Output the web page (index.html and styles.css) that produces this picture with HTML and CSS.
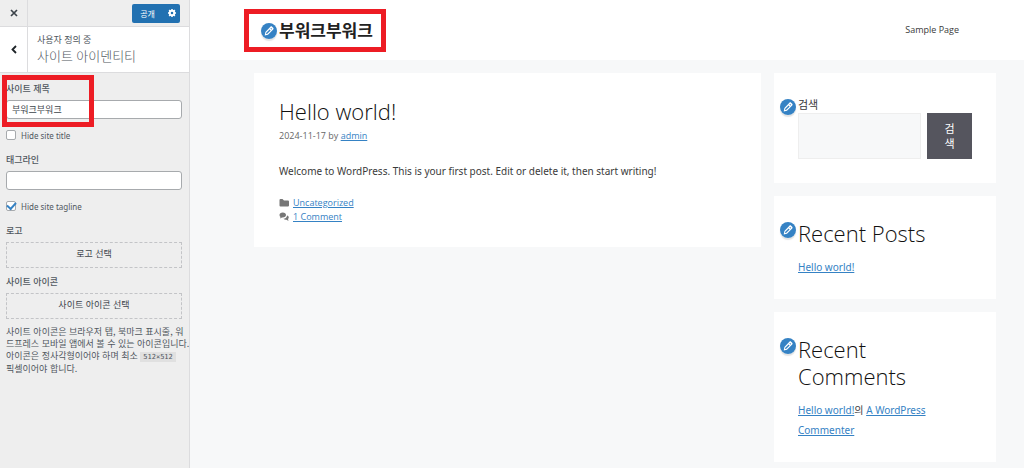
FILE: index.html
```html
<!DOCTYPE html>
<html lang="ko">
<head>
<meta charset="utf-8">
<meta name="viewport" content="width=device-width, initial-scale=1">
<title>사이트 아이덴티티</title>
<link rel="stylesheet" href="styles.css">
</head>
<body>
<svg class="defs" width="0" height="0" aria-hidden="true">
  <symbol id="pencil" viewBox="0 0 16 16">
    <circle cx="8" cy="8" r="8" fill="#3582c4"/>
    <path fill="#fff" fill-rule="evenodd" d="M9.400 3.700c.5-.5 1.200-.5 1.700 0l1.100 1.100c.5.5.5 1.200 0 1.700l-5.200 5.200-3.300.7.700-3.300zM5.300 9.700l-.3 1.300 1.300-.3 3.300-3.300-1-1zM9.400 5.600l1 1 .7-.7-1-1z"/>
  </symbol>
</svg>
<div class="app">
  <aside class="panel">
    <div class="bar">
      <button class="close" type="button" aria-label="닫기">
        <svg width="8" height="8" viewBox="0 0 8 8"><path d="M1 1l6 6M7 1L1 7" stroke="#3c434a" stroke-width="1.700"/></svg>
      </button>
      <div class="publish">
        <button class="save" type="button">공개</button>
        <button class="gear" type="button" aria-label="설정">
          <svg width="8" height="8" viewBox="0 0 16 16"><circle cx="8" cy="8" r="4.500" fill="none" stroke="#fff" stroke-width="4"/><path d="M8 0v3M8 13v3M0 8h3M13 8h3M2.300 2.300l2 2M11.700 11.700l2 2M13.700 2.300l-2 2M4.300 11.700l-2 2" stroke="#fff" stroke-width="3"/></svg>
        </button>
      </div>
    </div>
    <div class="heading">
      <button class="back" type="button" aria-label="뒤로">
        <svg width="6" height="9" viewBox="0 0 6 9"><path d="M5 1L1.500 4.500 5 8" fill="none" stroke="#1d2327" stroke-width="1.800"/></svg>
      </button>
      <div class="heading-text">
        <span class="kicker">사용자 정의 중</span>
        <h1 class="panel-title">사이트 아이덴티티</h1>
      </div>
    </div>
    <form class="controls">
      <div class="field marked">
        <label class="label" for="title">사이트 제목</label>
        <input class="text" id="title" type="text" value="부워크부워크">
        <span class="mark mark-field"></span>
      </div>
      <label class="check"><input type="checkbox">Hide site title</label>
      <div class="field">
        <label class="label" for="tagline">태그라인</label>
        <input class="text" id="tagline" type="text">
      </div>
      <label class="check"><input type="checkbox" checked>Hide site tagline</label>
      <div class="field upload">
        <span class="label">로고</span>
        <button class="select" type="button">로고 선택</button>
      </div>
      <div class="field">
        <span class="label">사이트 아이콘</span>
        <button class="select" type="button">사이트 아이콘 선택</button>
      </div>
      <p class="help">사이트 아이콘은 브라우저 탭, 북마크 표시줄, 워<br>드프레스 모바일 앱에서 볼 수 있는 아이콘입니다.<br>아이콘은 정사각형이어야 하며 최소 <code>512×512</code><br>픽셀이어야 합니다.</p>
    </form>
  </aside>
  <div class="preview">
    <header class="site-header">
      <div class="brand">
        <button class="edit edit-brand" type="button" aria-label="제목 편집"><svg width="16" height="16"><use href="#pencil"/></svg></button>
        <span class="site-name">부워크부워크</span>
        <span class="mark mark-brand"></span>
      </div>
      <nav><a class="nav-link" href="#">Sample Page</a></nav>
    </header>
    <div class="columns">
      <main class="card post">
        <h2 class="title">Hello world!</h2>
        <p class="meta">2024-11-17 by <a href="#">admin</a></p>
        <p class="body">Welcome to WordPress. This is your first post. Edit or delete it, then start writing!</p>
        <div class="terms">
          <div class="term"><svg width="10" height="10" viewBox="0 0 20 20"><path fill="#777" d="M1 4q0-2 2-2h4l3 3h8q2 0 2 2v8q0 2-2 2H3q-2 0-2-2z"/></svg><a href="#">Uncategorized</a></div>
          <div class="term"><svg width="10" height="10" viewBox="0 0 20 20"><path fill="#777" d="M7.500 1C3.500 1 1 3 1 6c0 1.700.8 3 2 4L2 13l4-2c5 .4 8-2 8-5 0-3-2.500-5-6.500-5zM16 7c0 4-3 6-7 6.400 1.300 1.500 3.500 2.200 6 1.900L19 18l-1-4c2.500-2 2-6-2-7z"/></svg><a href="#">1 Comment</a></div>
        </div>
      </main>
      <aside class="widgets">
        <section class="card widget">
          <button class="edit" type="button" aria-label="검색 위젯 편집"><svg width="16" height="16"><use href="#pencil"/></svg></button>
          <label class="search-label" for="q">검색</label>
          <div class="search-row">
            <input class="search-input" id="q" type="search">
            <button class="search-button" type="button">검<br>색</button>
          </div>
        </section>
        <section class="card widget list">
          <button class="edit" type="button" aria-label="글 위젯 편집"><svg width="16" height="16"><use href="#pencil"/></svg></button>
          <h2 class="title">Recent Posts</h2>
          <p class="links"><a href="#">Hello world!</a></p>
        </section>
        <section class="card widget list">
          <button class="edit" type="button" aria-label="댓글 위젯 편집"><svg width="16" height="16"><use href="#pencil"/></svg></button>
          <h2 class="title">Recent<br>Comments</h2>
          <p class="links"><a href="#">Hello world!</a>의 <a href="#">A WordPress Commenter</a></p>
        </section>
      </aside>
    </div>
  </div>
</div>
</body>
</html>
```
FILE: styles.css
```css
* { box-sizing: border-box; }
body {
  margin: 0;
  font-family: "Noto Sans", "Noto Sans CJK KR", sans-serif;
  color: #3a3a3a;
}
h1, h2, p { margin: 0; font-weight: 400; }
button { margin: 0; padding: 0; border: 0; background: none; font: inherit; color: inherit; }
svg { display: block; }
.defs { position: absolute; }
a { color: #3582c4; }

.app { display: flex; min-height: 100vh; background: #f7f8f9; }

.panel {
  flex: 0 0 190px;
  min-width: 0;
  border-right: 1px solid #dcdcde;
  background: #eee;
  color: #50575e;
  font-size: 8px;
}
.bar {
  display: flex;
  justify-content: space-between;
  height: 27px;
  border-bottom: 1px solid #dcdcde;
}
.close, .back {
  display: grid;
  place-items: center;
  width: 28px;
  border-right: 1px solid #dcdcde;
}
.publish {
  display: flex;
  align-self: center;
  height: 19px;
  margin-right: 9px;
  border-radius: 2px;
  background: #2271b1;
  color: #fff;
}
.save { width: 31px; }
.gear { display: grid; place-items: center; width: 17px; }

.heading {
  display: flex;
  height: 46px;
  border-bottom: 1px solid #dcdcde;
  background: #fff;
}
.heading-text { padding: 7px 9px; }
.kicker { display: block; line-height: 12px; font-size: 9px; }
.panel-title { font-size: 13px; line-height: 20px; font-weight: 300; }

.controls { padding: 10px 7px 10px 6px; }
.marked { position: relative; }
.label { display: block; font-size: 9px; line-height: 12px; font-weight: 500; margin-bottom: 5px; }
.text {
  display: block;
  width: 100%;
  height: 19px;
  padding: 0 5px;
  border: 1px solid #a7aaad;
  border-radius: 3px;
  background: #fff;
  color: #3c434a;
  font: inherit;
  font-size: 9px;
}
.check { display: flex; align-items: center; gap: 5px; height: 12px; margin: 10px 0 13px; }
.check input {
  appearance: none;
  width: 10px;
  height: 10px;
  margin: 0;
  border: 1px solid #a7aaad;
  border-radius: 2px;
  background: #fff;
  display: grid;
  place-items: center;
}
.check input:checked::before {
  content: "";
  width: 7px;
  height: 4px;
  margin-bottom: 2px;
  border: solid #3582c4;
  border-width: 0 0 2px 2px;
  transform: rotate(-48deg);
}
.field .select {
  display: block;
  width: 100%;
  height: 26px;
  border: 1px dashed #c3c4c7;
  color: #3c434a;
  font-family: "Noto Sans CJK KR", sans-serif;
  font-size: 9px;
  line-height: 12px;
  padding-bottom: 2px;
}
.upload { margin-bottom: 8px; }
.help {
  margin-top: 7px;
  font-family: "Noto Sans CJK KR", sans-serif;
  font-size: 9px;
  line-height: 12px;
  white-space: nowrap;
}
.help code { padding: 1px 3px; background: #e0e0e0; font-family: "DejaVu Sans Mono", monospace; font-size: 7px; }

.mark { position: absolute; border: 5px solid #ed1c24; pointer-events: none; }
.mark-field { left: -4px; top: -8px; width: 92px; height: 52px; }
.mark-brand { left: -35px; top: -8px; width: 142px; height: 43px; }

.preview { flex: 1; min-width: 0; }
.site-header {
  display: flex;
  align-items: center;
  justify-content: space-between;
  height: 60px;
  padding: 0 65px 0 89px;
  background: #fff;
}
.brand { position: relative; }
.site-name { display: block; font-size: 17px; line-height: 27px; font-weight: 700; color: #222; }
.nav-link {
  display: block;
  font-family: "Open Sans", sans-serif;
  font-size: 9px;
  line-height: 14px;
  color: #3a3a3a;
  text-decoration: none;
}
.edit {
  position: absolute;
  left: 6px;
  top: 26px;
  width: 16px;
  height: 16px;
  border-radius: 50%;
  box-shadow: 0 2px 1px #3c434a26;
}
.edit-brand { left: -18px; top: 6px; }

.columns {
  display: grid;
  grid-template-columns: minmax(0, 507fr) minmax(0, 222fr);
  gap: 13px;
  align-items: start;
  padding: 13px 28px 5px 64px;
}
.card { background: #fff; padding: 24px; }
.title { font-family: "Open Sans", sans-serif; font-size: 22px; line-height: 27px; font-weight: 300; color: #111; }
.post { padding: 25px 24px 23px 25px; }
.meta { margin-top: 4px; font-family: "Open Sans", sans-serif; font-size: 9px; line-height: 14px; color: #666; }
.body { margin: 18px 0 15px; font-size: 10px; line-height: 20px; }
.terms { font-family: "Open Sans", sans-serif; font-size: 9px; line-height: 14px; }
.term { display: flex; align-items: center; gap: 4px; }
.widgets { display: grid; grid-template-columns: minmax(0, 1fr); gap: 13px; }
.widget { position: relative; }
.list { padding-bottom: 22px; }
.links { margin-top: 10px; font-size: 10px; line-height: 20px; }
.search-label { display: block; font-size: 11px; line-height: 16px; }
.search-row { display: flex; gap: 6px; }
.search-input {
  flex: 1;
  min-width: 0;
  border: 1px solid #eee;
  background: #f7f8f9;
}
.search-button {
  width: 45px;
  height: 46px;
  background: #55555e;
  color: #fff;
  font-size: 11px;
  line-height: 15px;
}
```
